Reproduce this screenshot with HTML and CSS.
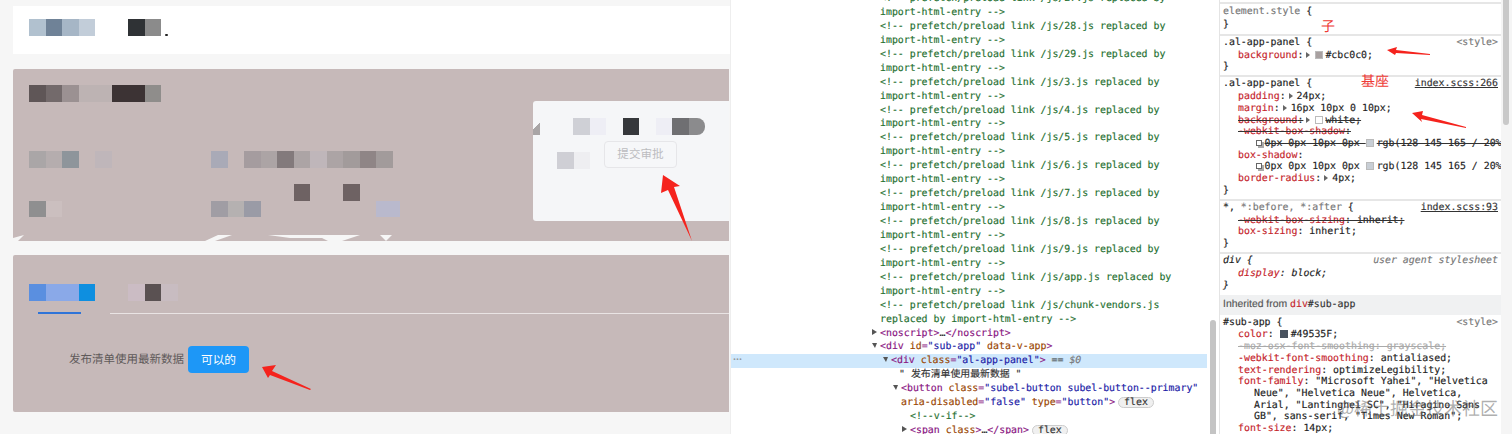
FILE: index.html
```html
<!DOCTYPE html>
<html lang="zh">
<head>
<meta charset="utf-8">
<title>al-app-panel</title>
<link rel="stylesheet" href="styles.css">
</head>
<body>
<div class="screen">
  <section class="app">
    <div class="top-card">
      <div class="mosaic">
        <i class="t a1"></i><i class="t a2"></i><i class="t a3"></i><i class="t a4"></i><i class="t"></i><i class="t"></i><i class="t k1"></i><i class="t k2"></i><i class="comma"></i>
      </div>
    </div>
    <div class="panel panel-one">
      <div class="panel-main">
        <div class="mosaic">
          <i class="t b1"></i><i class="t b2"></i><i class="t b3"></i><i class="t b4"></i><i class="t b4"></i><i class="t k3"></i><i class="t k3"></i><i class="t k4"></i>
        </div>
        <div class="mosaic row-gap-3">
          <i class="t c1"></i><i class="t c2"></i><i class="t c3"></i><i class="t"></i><i class="t c4"></i><i class="t"></i><i class="t"></i><i class="t"></i><i class="t"></i><i class="t"></i><i class="t"></i>
          <i class="t c5"></i><i class="t"></i><i class="t c6"></i><i class="t c7"></i><i class="t c8"></i><i class="t c7"></i><i class="t c4"></i><i class="t c7"></i><i class="t c9"></i><i class="t c10"></i><i class="t c9"></i>
        </div>
        <div class="mosaic row-gap-1">
          <i class="t"></i><i class="t"></i><i class="t"></i><i class="t"></i><i class="t"></i><i class="t"></i><i class="t"></i><i class="t"></i><i class="t"></i><i class="t"></i><i class="t"></i><i class="t"></i><i class="t"></i><i class="t"></i><i class="t"></i><i class="t"></i>
          <i class="t d1"></i><i class="t"></i><i class="t"></i><i class="t d1"></i>
        </div>
        <div class="mosaic">
          <i class="t e1"></i><i class="t e2"></i><i class="t"></i><i class="t"></i><i class="t"></i><i class="t"></i><i class="t"></i><i class="t"></i><i class="t"></i><i class="t"></i><i class="t"></i>
          <i class="t e3"></i><i class="t e4"></i><i class="t e5"></i><i class="t"></i><i class="t"></i><i class="t"></i><i class="t"></i><i class="t"></i><i class="t"></i><i class="t"></i><i class="t e6"></i><i class="t e6-half"></i>
        </div>
      </div>
      <aside class="approve-card">
        <div class="mosaic card-row">
          <i class="wedge"></i><i class="t"></i><i class="t f1"></i><i class="t f2"></i><i class="t"></i><i class="t k5"></i><i class="t"></i><i class="t f2"></i><i class="t f3"></i><i class="t f4"></i>
        </div>
        <div class="approve-row">
          <div class="mosaic"><i class="t g1"></i><i class="t g2"></i></div>
          <button class="submit-btn" type="button">提交审批</button>
        </div>
      </aside>
    </div>
    <div class="panel panel-two">
      <div class="mosaic tab-row">
        <i class="t h1"></i><i class="t h2"></i><i class="t h2"></i><i class="t h3"></i><i class="t"></i><i class="t"></i><i class="t h4"></i><i class="t k6"></i><i class="t h5"></i>
      </div>
      <div class="tab-line"><span class="tab-active"></span></div>
      <div class="publish-row">
        <span>发布清单使用最新数据</span>
        <button class="ok-btn" type="button">可以的</button>
      </div>
    </div>
  </section>

  <section class="tree">
    <div class="tree-lines">
      <div class="ln c l0">&lt;!-- prefetch/preload link /js/27.js replaced by</div>
      <div class="ln c l0">import-html-entry --&gt;</div>
      <div class="ln c l0">&lt;!-- prefetch/preload link /js/28.js replaced by</div>
      <div class="ln c l0">import-html-entry --&gt;</div>
      <div class="ln c l0">&lt;!-- prefetch/preload link /js/29.js replaced by</div>
      <div class="ln c l0">import-html-entry --&gt;</div>
      <div class="ln c l0">&lt;!-- prefetch/preload link /js/3.js replaced by</div>
      <div class="ln c l0">import-html-entry --&gt;</div>
      <div class="ln c l0">&lt;!-- prefetch/preload link /js/4.js replaced by</div>
      <div class="ln c l0">import-html-entry --&gt;</div>
      <div class="ln c l0">&lt;!-- prefetch/preload link /js/5.js replaced by</div>
      <div class="ln c l0">import-html-entry --&gt;</div>
      <div class="ln c l0">&lt;!-- prefetch/preload link /js/6.js replaced by</div>
      <div class="ln c l0">import-html-entry --&gt;</div>
      <div class="ln c l0">&lt;!-- prefetch/preload link /js/7.js replaced by</div>
      <div class="ln c l0">import-html-entry --&gt;</div>
      <div class="ln c l0">&lt;!-- prefetch/preload link /js/8.js replaced by</div>
      <div class="ln c l0">import-html-entry --&gt;</div>
      <div class="ln c l0">&lt;!-- prefetch/preload link /js/9.js replaced by</div>
      <div class="ln c l0">import-html-entry --&gt;</div>
      <div class="ln c l0">&lt;!-- prefetch/preload link /js/app.js replaced by</div>
      <div class="ln c l0">import-html-entry --&gt;</div>
      <div class="ln c l0">&lt;!-- prefetch/preload link /js/chunk-vendors.js</div>
      <div class="ln c l0">replaced by import-html-entry --&gt;</div>
      <div class="ln l0"><i class="tw right"></i><span class="tag">&lt;noscript&gt;</span>…<span class="tag">&lt;/noscript&gt;</span></div>
      <div class="ln l0"><i class="tw down"></i><span class="tag">&lt;div</span> <span class="attr">id</span><span class="tag">=</span><span class="val">"sub-app"</span> <span class="attr">data-v-app</span><span class="tag">&gt;</span></div>
      <div class="ln selected"><span class="dots">•••</span><span class="sel-code"><i class="tw down"></i><span class="tag">&lt;div</span> <span class="attr">class</span><span class="tag">=</span><span class="val">"al-app-panel"</span><span class="tag">&gt;</span> <span class="plain">==</span> <em class="ref">$0</em></span></div>
      <div class="ln l2 plain">" 发布清单使用最新数据 "</div>
      <div class="ln l3"><i class="tw down"></i><span class="tag">&lt;button</span> <span class="attr">class</span><span class="tag">=</span><span class="val">"subel-button subel-button--primary"</span></div>
      <div class="ln l3"><span class="attr">aria-disabled</span><span class="tag">=</span><span class="val">"false"</span> <span class="attr">type</span><span class="tag">=</span><span class="val">"button"</span><span class="tag">&gt;</span><span class="badge">flex</span></div>
      <div class="ln c l4">&lt;!--v-if--&gt;</div>
      <div class="ln l4"><i class="tw right"></i><span class="tag">&lt;span</span> <span class="attr">class</span><span class="tag">&gt;</span>…<span class="tag">&lt;/span&gt;</span><span class="badge">flex</span></div>
    </div>
    <div class="tree-scroll"><span class="tree-thumb"></span></div>
  </section>

  <section class="styles">
    <div class="styles-pane">
      <div class="rule rule-first">
        <div class="sl head"><span class="muted">element.style</span> {</div>
        <div class="sl">}</div>
      </div>
      <div class="rule">
        <div class="sl head between"><span>.al-app-panel {</span><span class="muted">&lt;style&gt;</span></div>
        <div class="sl in"><span class="p">background</span>:<i class="exp"></i><i class="sw sw-panel"></i>#cbc0c0;</div>
        <div class="sl">}</div>
      </div>
      <div class="rule">
        <div class="sl head between"><span>.al-app-panel {</span><a class="src">index.scss:266</a></div>
        <div class="sl in"><span class="p">padding</span>:<i class="exp"></i>24px;</div>
        <div class="sl in"><span class="p">margin</span>:<i class="exp"></i>16px 10px 0 10px;</div>
        <div class="sl in"><s><span class="p">background</span>:<i class="exp"></i><i class="sw sw-white"></i>white;</s></div>
        <div class="sl in"><s><span class="p">-webkit-box-shadow</span>:</s></div>
        <div class="sl in2"><i class="shadow-ico"></i><s>0px 0px 10px 0px <i class="sw sw-shadow"></i>rgb(128 145 165 / 20%)</s></div>
        <div class="sl in"><span class="p">box-shadow</span>:</div>
        <div class="sl in2"><i class="shadow-ico"></i>0px 0px 10px 0px <i class="sw sw-shadow"></i>rgb(128 145 165 / 20%)</div>
        <div class="sl in"><span class="p">border-radius</span>:<i class="exp"></i>4px;</div>
        <div class="sl">}</div>
      </div>
      <div class="rule">
        <div class="sl head between"><span><span>*</span>, <span class="muted">*:before, *:after</span> {</span><a class="src">index.scss:93</a></div>
        <div class="sl in"><s><span class="p">-webkit-box-sizing</span>: inherit;</s></div>
        <div class="sl in"><span class="p">box-sizing</span>: inherit;</div>
        <div class="sl">}</div>
      </div>
      <div class="rule ua">
        <div class="sl head between"><span>div {</span><span class="muted">user agent stylesheet</span></div>
        <div class="sl in"><span class="p">display</span>: block;</div>
        <div class="sl">}</div>
      </div>
      <div class="inherited">Inherited from <span class="inh-code"><span class="p">div</span>#sub-app</span></div>
      <div class="rule rule-last">
        <div class="sl head between"><span>#sub-app {</span><span class="muted">&lt;style&gt;</span></div>
        <div class="sl in"><span class="p">color</span>: <i class="sw sw-text"></i>#49535F;</div>
        <div class="sl in"><s class="faded">-moz-osx-font-smoothing: grayscale;</s></div>
        <div class="sl in"><span class="p">-webkit-font-smoothing</span>: antialiased;</div>
        <div class="sl in"><span class="p">text-rendering</span>: optimizeLegibility;</div>
        <div class="sl in"><span class="p">font-family</span>: "Microsoft Yahei", "Helvetica</div>
        <div class="sl in3">Neue", "Helvetica Neue", Helvetica,</div>
        <div class="sl in3">Arial, "Lantinghei SC", "Hiragino Sans</div>
        <div class="sl in3">GB", sans-serif, "Times New Roman";</div>
        <div class="sl in"><span class="p">font-size</span>: 14px;</div>
      </div>
    </div>
    <div class="styles-scroll"><span class="styles-thumb"></span></div>
  </section>

  <svg class="marks" viewBox="0 0 1512 434" aria-hidden="true">
    <polygon class="tear" points="13,241 13,238 24,235 18,241"/>
    <polygon class="tear" points="205,241 218,235 232,235 215,241"/>
    <polygon class="tear" points="268,235 360,235 342,241 328,241 322,238 290,238"/>
    <polygon class="tear" points="380,235 392,235 386,241"/>
    <polygon class="arrow" points="663,175 680,186 674,187 692,241 668,190 661,193"/>
    <polygon class="arrow" points="262,367 276,365 272,371 311,389 310,390 270,375 268,378"/>
    <polygon class="arrow" points="1387,50 1397,47 1396,50 1430,54 1430,55 1396,53 1395,55"/>
    <polygon class="arrow" points="1412,113 1423,111 1422,115 1466,127 1466,128 1421,119 1422,122"/>
  </svg>
  <span class="note note-child">子</span>
  <span class="note note-base">基座</span>
  <span class="watermark">@稀土掘金技术社区</span>
</div>
</body>
</html>
```

FILE: styles.css
```css
* { box-sizing: border-box; }
html, body { margin: 0; padding: 0; background: #fff; }

.screen {
  position: relative;
  width: 1512px;
  height: 434px;
  overflow: hidden;
  display: flex;
  font-family: "DejaVu Sans Mono", monospace;
  font-size: 9.9px;
  text-rendering: geometricPrecision;
  color: #222;
}

/* left: application */
.app {
  width: 730px;
  flex: none;
  padding: 6px 0 0 13px;
  background: #f6f6f6;
  display: flex;
  flex-direction: column;
  font-family: "Noto Sans CJK SC", sans-serif;
}
.top-card {
  height: 48px;
  background: #fff;
  padding: 13px 0 0 16px;
}
.panel {
  background: #c6b9b9;
  border-radius: 2px 0 0 2px;
  width: 716px;
}
.panel-one {
  margin-top: 15px;
  height: 172px;
  padding: 16px 0 0 16px;
  display: flex;
  justify-content: space-between;
  align-items: flex-start;
}
.panel-main { width: 480px; }
.panel-two {
  margin-top: 14px;
  height: 157px;
  padding-top: 29px;
}

.mosaic { display: flex; height: 16.55px; }
.t { flex: none; width: 16.55px; height: 16.55px; display: block; }
.row-gap-3 { margin-top: 49.6px; }
.row-gap-1 { margin-top: 16.55px; }
.comma { width: 3px; height: 2px; margin: 15px 0 0 4px; background: #222; border-radius: 2px; }

.a1 { background: #b1c1cf; }
.a2 { background: #6f8297; }
.a3 { background: #a6b6c6; }
.a4 { background: #c2cdd9; }
.k1 { background: #2f3235; }
.k2 { background: #8b8b8b; }
.b1 { background: #5f5657; }
.b2 { background: #736a6b; }
.b3 { background: #9b9192; }
.b4 { background: #bdb3b3; }
.k3 { background: #3c3334; }
.k4 { background: #8f8d8b; }
.c1 { background: #aaa6a7; }
.c2 { background: #b5adae; }
.c3 { background: #8e959b; }
.c4 { background: #bfb6ba; }
.c5 { background: #a9aab7; }
.c6 { background: #a59c9f; }
.c7 { background: #aca4a5; }
.c8 { background: #837a7c; }
.c9 { background: #a29b9b; }
.c10 { background: #8f8586; }
.d1 { background: #6e6263; }
.e1 { background: #8f8f90; }
.e2 { background: #cbbfbf; }
.e3 { background: #a09da4; }
.e4 { background: #b5b1b1; }
.e5 { background: #9a9ba6; }
.e6 { background: #b9b9cd; }
.e6-half { background: #b9b9cd; width: 7px; }

.approve-card {
  width: 196px;
  height: 120px;
  margin-top: 16px;
  padding-top: 17px;
  background: #f5f6f8;
  border-radius: 3px 0 0 3px;
  flex: none;
}
.wedge { width: 7px; height: 16.55px; background: linear-gradient(135deg, transparent 50%, #a9a5a6 50%); }
.card-row .t:nth-child(2) { width: 33px; }
.f1 { background: #cfd0d6; }
.f2 { background: #eeeef5; }
.f3 { background: #6f6f72; }
.f4 { background: #8b8b8d; border-radius: 0 8px 8px 0; }
.k5 { background: #36383c; }
.approve-row {
  display: flex;
  align-items: flex-end;
  height: 26px;
  margin: 7px 0 0 24px;
  gap: 14px;
}
.approve-row .mosaic { width: 33px; margin-bottom: -1px; }
.g1 { background: #cfcfd5; }
.g2 { background: #eeeef1; }
.submit-btn {
  width: 73px;
  height: 27px;
  padding: 0;
  border: 1px solid #e6e6e9;
  border-radius: 4px;
  background: #f6f7f9;
  color: #bcbcc0;
  font: 11.6px/1 "Noto Sans CJK SC", sans-serif;
}

.tab-row { margin-left: 16px; }
.h1 { background: #5a8fe0; }
.h2 { background: #8aa9e8; }
.h3 { background: #0e8fe0; }
.h4 { background: #cbbcc4; }
.k6 { background: #5a5152; }
.h5 { background: #c8bcc1; }
.tab-line {
  position: relative;
  height: 1px;
  margin: 12px 0 0 97px;
  background: #e9e4e4;
}
.tab-active {
  position: absolute;
  left: -72px;
  top: -1px;
  width: 43px;
  height: 2px;
  background: #2f74d8;
}
.publish-row {
  display: flex;
  align-items: center;
  gap: 4px;
  margin: 32px 0 0 56px;
  color: #5f5a5a;
  font-size: 11.5px;
}
.ok-btn {
  width: 61px;
  height: 27px;
  padding: 0;
  border: 0;
  border-radius: 4px;
  background: #1d97f7;
  color: #fff;
  font: 11.7px/1 "Noto Sans CJK SC", sans-serif;
}

/* middle: elements tree */
.tree {
  width: 489px;
  flex: none;
  display: flex;
  background: #fff;
  border-left: 1px solid #eee;
}
.tree-lines { width: 476px; flex: none; margin-top: -8px; }
.ln { height: 13.95px; line-height: 13.95px; white-space: nowrap; overflow: hidden; -webkit-text-stroke: .15px; }
.l0 { padding-left: 149px; }
.l2 { padding-left: 168px; }
.l3 { padding-left: 170px; }
.l4 { padding-left: 179px; }
.c { color: #1f7030; }
.tag { color: #881280; }
.attr { color: #994500; }
.val { color: #1a1aa6; }
.plain { color: #333; font-family: "DejaVu Sans Mono", "Noto Sans CJK SC", monospace; }
.ref { color: #777; }
.selected { display: flex; background: #cfe8fc; }
.dots { width: 160px; padding-left: 2px; color: #888; font-size: 5px; flex: none; }
.tw { display: inline-block; width: 0; height: 0; margin-left: -8px; margin-right: 3px; vertical-align: 1px; }
.tw.right { border-left: 5px solid #555; border-top: 3px solid transparent; border-bottom: 3px solid transparent; }
.tw.down { border-top: 5px solid #555; border-left: 3px solid transparent; border-right: 2px solid transparent; }
.badge {
  display: inline-block;
  height: 11px;
  line-height: 10px;
  margin-left: 3px;
  padding: 0 5px;
  background: #f0f0f0;
  border: 1px solid #ccc;
  border-radius: 6px;
  color: #333;
  vertical-align: 0;
}
.tree-scroll { width: 12px; flex: none; padding: 320px 0 0 3px; }
.tree-thumb { display: block; width: 6px; height: 120px; background: #c4c4c4; border-radius: 3px; }

/* right: styles pane */
.styles { flex: 1; display: flex; min-width: 0; background: #f5f5f5; }
.styles-pane {
  width: 282px;
  flex: none;
  overflow: hidden;
  padding-top: 2px;
  background: #fff;
  border-left: 1px solid #e4e4e4;
  -webkit-text-stroke: .15px;
}
.rule { padding: 1px 3px 2.3px 3px; border-top: 2px solid #e6e6e6; }
.rule-first { padding: 2px 3px 3px; }
.ua { font-style: italic; padding-bottom: 3px; }
.sl { height: 11.7px; line-height: 11.7px; white-space: nowrap; }
.head { margin-bottom: 1.3px; }
.between { display: flex; justify-content: space-between; }
.in { padding-left: 15px; }
.in2 { padding-left: 42.6px; }
.in3 { padding-left: 31px; }
.p { color: #c5242b; }
.muted { color: #777; }
.src { color: #333; text-decoration: underline; }
s { text-decoration-color: #333; }
.faded { color: #aaa; text-decoration-color: #aaa; }
.exp {
  display: inline-block;
  margin: 0 4px 0 3px;
  border-left: 4px solid #666;
  border-top: 3px solid transparent;
  border-bottom: 3px solid transparent;
  vertical-align: 0;
}
.sw { display: inline-block; width: 8px; height: 8px; margin-right: 3px; border: 1px solid #bbb; vertical-align: -1px; }
.exp + .sw { margin-left: 1px; margin-right: 2px; }
.sw-panel { background: #a8a0a0; }
.sw-white { background: #fff; }
.sw-shadow { background: #c8ced5; }
.sw-text { background: #49535f; border-color: #49535f; }
.shadow-ico {
  display: inline-block;
  width: 6px;
  height: 6px;
  margin: 0 3px 0 -10px;
  border: 1px solid #666;
  box-shadow: 2px 2px 0 #aaa;
  vertical-align: 0;
}
.inherited {
  height: 20px;
  padding-left: 3px;
  background: #f0f1f2;
  color: #555;
  font: 10.4px/20px "Liberation Sans", sans-serif;
}
.inh-code { font: 9.9px "DejaVu Sans Mono", monospace; color: #333; }
.rule-last { border-top: 0; padding-top: 2px; }
.styles-scroll { flex: 1; padding: 0 0 0 2px; }
.styles-thumb { display: block; width: 6px; height: 125px; background: #c9c9c9; border-radius: 0 0 3px 3px; }

/* annotations drawn over the screenshot */
.marks { position: absolute; left: 0; top: 0; width: 1512px; height: 434px; pointer-events: none; }
.arrow { fill: #f5231d; }
.tear { fill: #f6f6f6; }
.note {
  position: absolute;
  color: #ee3b36;
  font: 14px/1 "Noto Sans CJK SC", sans-serif;
}
.note-child { left: 1321px; top: 19px; }
.note-base { left: 1361px; top: 74px; }
.watermark {
  position: absolute;
  left: 1337px;
  top: 398px;
  color: rgba(95, 95, 95, .5);
  font: 18px/20px "Noto Sans CJK SC", sans-serif;
  white-space: nowrap;
}
```
